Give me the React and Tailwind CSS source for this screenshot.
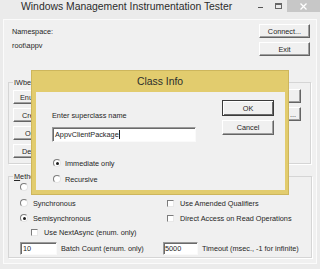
import React from 'react';

const Btn = ({ children, className = '', isDefault = false }) => (
  <div
    className={`flex items-center justify-center bg-[#f0f0f0] whitespace-nowrap overflow-hidden ${
      isDefault
        ? 'border border-[#3a3a3a] shadow-[inset_1px_1px_0_#ffffff,inset_-1px_-1px_0_#6a6a6a]'
        : 'border border-t-white border-l-white border-r-[#646464] border-b-[#646464] shadow-[inset_-1px_-1px_0_#a0a0a0]'
    } ${className}`}
  >
    {children}
  </div>
);

const Radio = ({ checked }) => (
  <span className="w-[8px] h-[8px] rounded-full bg-white border border-t-[#7c7c7c] border-l-[#7c7c7c] border-r-[#e4e4e4] border-b-[#e4e4e4] flex items-center justify-center shrink-0">
    {checked && <span className="w-[3px] h-[3px] rounded-full bg-[#1e1e1e]" />}
  </span>
);

const Check = () => (
  <span className="w-[7px] h-[7px] bg-white border border-t-[#7c7c7c] border-l-[#7c7c7c] border-r-[#e8e8e8] border-b-[#e8e8e8] shrink-0" />
);

const Edit = ({ children, className = '' }) => (
  <div className={`bg-white border border-t-[#9a9a9a] border-l-[#9a9a9a] border-r-[#fafafa] border-b-[#fafafa] shadow-[inset_1px_1px_0_#6a6a6a] flex items-center ${className}`}>
    {children}
  </div>
);

// left-column buttons sit under the dialog; only their first letters show
const leftButtons = [
  { label: 'Enum Classes...', pad: 'pl-[6px]' },
  { label: 'Create Class...', pad: 'pl-[8px]' },
  { label: 'Open Class...', pad: 'pl-[11px]' },
  { label: 'Delete Class...', pad: 'pl-[8px]' },
];

export default function App() {
  return (
    <div className="w-[320px] h-[269px] bg-[#ebebeb] relative overflow-hidden font-['Liberation_Sans',Arial,sans-serif] text-[7.3px] leading-[9px] text-[#262626]">
      {/* title bar */}
      <div className="h-[19px] flex">
        <div className="flex-1 pl-[21px] pt-[1px] text-[10.4px] leading-[12px] text-[#2c2c2c] whitespace-nowrap">
          Windows Management Instrumentation Tester
        </div>
        <div className="flex items-start">
          <div className="w-[20px] h-[12px] flex justify-center">
            <span className="w-[5px] h-[1px] mt-[7px] bg-[#555]" />
          </div>
          <div className="w-[17px] h-[12px] flex justify-center">
            <span className="w-[7px] h-[6px] mt-[3px] border border-[#666] border-t-2" />
          </div>
          <div className="w-[33px] h-[12px] bg-[#c7c7c7] flex items-center justify-center">
            <svg width="7" height="7" viewBox="0 0 7 7">
              <path d="M0.5 0.5 L6.5 6.5 M6.5 0.5 L0.5 6.5" stroke="#fff" strokeWidth="1.3" />
            </svg>
          </div>
        </div>
      </div>

      {/* client area */}
      <div className="mx-[3px] h-[245px] border border-[#fbfbfb] bg-[#f0f0f0] flex flex-col">
        <div className="flex justify-between">
          <div className="pl-[8px] pt-[7px]">
            <div>Namespace:</div>
            <div className="mt-[5px]">root\appv</div>
          </div>
          <div className="pt-[4px] mr-[6px] flex flex-col gap-[4px]">
            <Btn className="w-[51px] h-[14px]">Connect...</Btn>
            <Btn className="w-[51px] h-[14px]">Exit</Btn>
          </div>
        </div>

        <fieldset className="mt-[22px] ml-[4px] w-[303px] h-[86px] border border-[#d5d5d5] shadow-[1px_1px_0_#ffffff]">
          <legend className="ml-[4px] px-[1px]">IWbemServices</legend>
          <div className="mt-[3px] pl-[4px] pr-[9px] grid grid-cols-[72px_72px_72px] justify-between">
            <div className="flex flex-col gap-[4px]">
              {leftButtons.map((b) => (
                <Btn key={b.label} className={`h-[14px] justify-start ${b.pad}`}>
                  {b.label}
                </Btn>
              ))}
            </div>
            <div className="flex flex-col gap-[4px]">
              <Btn className="h-[14px]" />
              <Btn className="h-[14px]" />
              <Btn className="h-[14px]" />
              <Btn className="h-[14px]" />
            </div>
            <div className="flex flex-col gap-[4px] -mt-[1px]">
              <Btn className="h-[14px]" />
              <Btn className="h-[14px] justify-end pr-[4px]">...</Btn>
            </div>
          </div>
        </fieldset>

        <fieldset className="mt-[8px] ml-[4px] w-[304px] h-[86px] border border-[#d5d5d5] shadow-[1px_1px_0_#ffffff]">
          <legend className="ml-[4px] px-[1px]">
            <span className="underline">M</span>ethod Invocation Options
          </legend>
          <div className="pl-[11px] grid grid-cols-[143px_1fr]">
            <div className="h-[12px] flex items-center gap-[5px]">
              <Radio />
            </div>
            <div className="h-[12px]" />

            <div className="mt-[4px] h-[12px] flex items-center gap-[5px]">
              <Radio />
              <span>Synchronous</span>
            </div>
            <div className="mt-[4px] h-[12px] pl-[4px] flex items-center gap-[6px]">
              <Check />
              <span>Use Amended Qualifiers</span>
            </div>

            <div className="mt-[3px] h-[12px] flex items-center gap-[5px]">
              <Radio checked />
              <span>Semisynchronous</span>
            </div>
            <div className="mt-[3px] h-[12px] pl-[4px] flex items-center gap-[6px]">
              <Check />
              <span>Direct Access on Read Operations</span>
            </div>

            <div className="mt-[2px] h-[12px] pl-[11px] flex items-center gap-[6px]">
              <Check />
              <span>Use NextAsync (enum. only)</span>
            </div>
            <div className="mt-[2px] h-[12px]" />

            <div className="mt-[4px] flex items-center gap-[4px]">
              <Edit className="w-[37px] h-[13px] pl-[2px]">10</Edit>
              <span>Batch Count (enum. only)</span>
            </div>
            <div className="mt-[4px] flex items-center gap-[4px]">
              <Edit className="w-[35px] h-[13px] pl-[1px]">5000</Edit>
              <span>Timeout (msec., -1 for infinite)</span>
            </div>
          </div>
        </fieldset>
      </div>

      {/* Class Info dialog */}
      <div className="absolute left-[31px] top-[70px] w-[258px] h-[125px] bg-[#e2cc6e] border border-[#cdb65c] flex flex-col">
        <div className="h-[21px] pt-[5px] text-center text-[10.4px] leading-[12px] text-[#2c2c2c]">Class Info</div>
        <div className="ml-[4px] w-[249px] h-[98px] bg-[#f0f0f0] flex">
          <div className="pl-[16px] pt-[19px] flex flex-col">
            <div>Enter superclass name</div>
            <Edit className="mt-[7px] w-[144px] h-[15px] pl-[2px]">
              <span>AppvClientPackage</span>
              <span className="w-[1px] h-[9px] bg-[#222]" />
            </Edit>
            <div className="mt-[16px] h-[10px] pl-[1px] flex items-center gap-[4px]">
              <Radio checked />
              <span>Immediate only</span>
            </div>
            <div className="mt-[6px] h-[10px] pl-[1px] flex items-center gap-[4px]">
              <Radio />
              <span>Recursive</span>
            </div>
          </div>
          <div className="ml-auto mr-[11px] pt-[8px] flex flex-col gap-[4px]">
            <Btn isDefault className="w-[52px] h-[16px]">OK</Btn>
            <Btn className="w-[52px] h-[15px]">Cancel</Btn>
          </div>
        </div>
      </div>
    </div>
  );
}
